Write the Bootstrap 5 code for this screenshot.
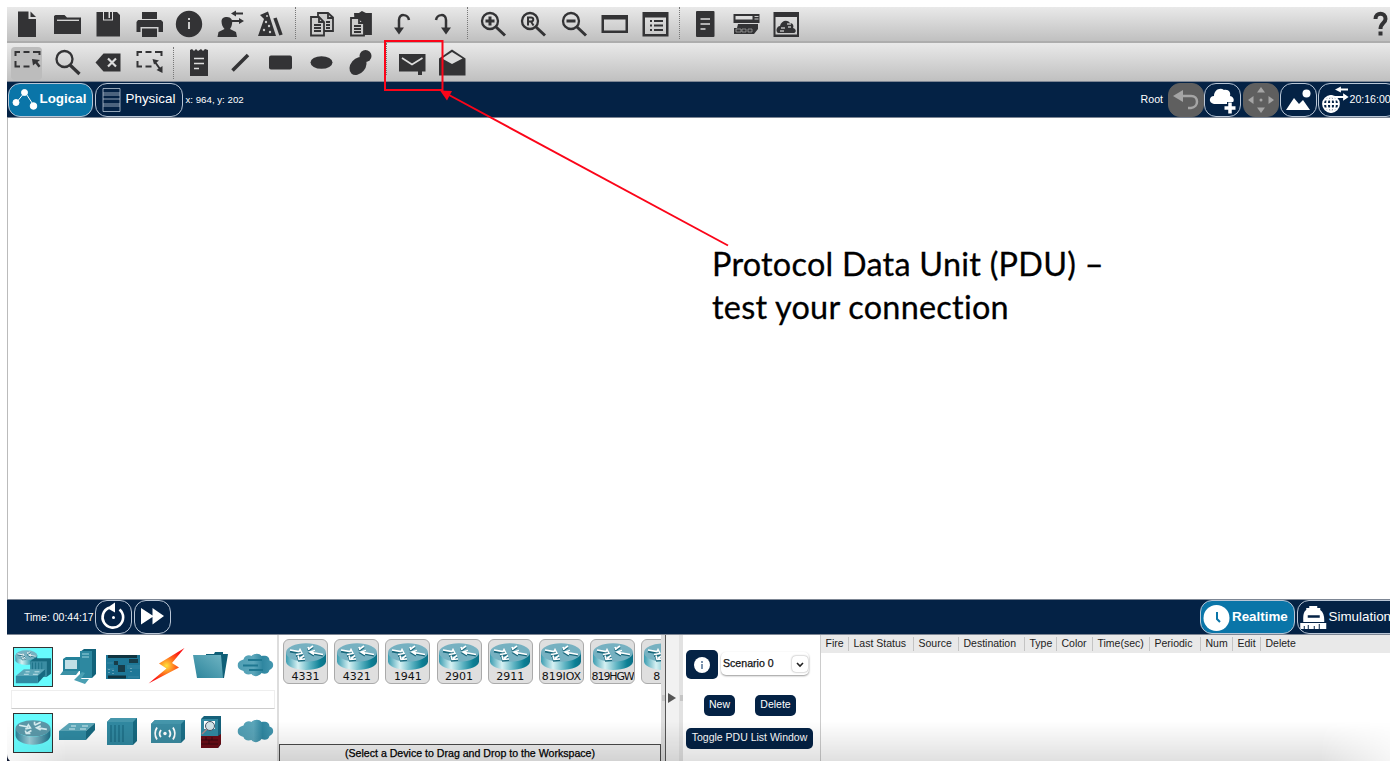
<!DOCTYPE html>
<html lang="en">
<head>
<meta charset="utf-8">
<title>Packet Tracer</title>
<link href="https://cdn.jsdelivr.net/npm/bootstrap@5.3.0/dist/css/bootstrap.min.css" rel="stylesheet">
<style>
:root{--navy:#042245;--ink:#333335;--blue:#0a75a8}
body{font-family:"Liberation Sans",Arial,sans-serif;background:#fff;width:1392px;height:761px;overflow:hidden;line-height:1.2;color:#222}
svg{display:block;flex:none}
.pt-app{margin:7px 2px 0 7px;width:1383px;height:754px;overflow:hidden}
.tools{background:linear-gradient(#e9e9e9,#c0c0c0);color:var(--ink)}
.tools-a{height:36px;border-bottom:2px solid #adadad}
.tools-b{height:38px}
.tool{width:40.5px;height:36px;flex:none;overflow:visible}
.divide{width:10px;flex:none;height:32px}
.divide::after{content:"";display:block;margin-left:4px;height:100%;border-left:1px dotted #777}
.picked{background:#bcbcbc;border-radius:4px;height:33px;width:31px;margin:4px 5.5px 0 4px}
.picked svg{margin:-4px 0 0 -4px}
.bar{background:var(--navy);color:#fff;border-top:1px solid #7d8694;border-bottom:1px solid #7d8694;font-size:10.6px}
.pill{height:34px;border:1.5px solid #b9c6d6;border-radius:12px;font-size:13.4px;flex:none}
.pill.on{background:var(--blue);font-weight:700}
.sq{width:37px}
.dim{width:36px;background:#5f5f5f;border-color:#5f5f5f;color:#a5a5a5}
.work{height:481px;border-left:1px solid #bbb}
.note-text{font-family:Lato,"Open Sans",sans-serif;font-size:32.4px;line-height:43px;letter-spacing:.25px;font-variant-ligatures:none;-webkit-text-stroke:.3px #000;color:#000;padding:123.500px 0 0 704px}
.dock{height:126px;position:relative;font-size:10.5px}
.shade{position:absolute;inset:auto 0 0 0;height:40px;background:linear-gradient(transparent,rgba(0,0,0,.12));-webkit-mask-image:linear-gradient(90deg,rgba(0,0,0,.3),#000 60px calc(100% - 70px),rgba(0,0,0,.3));pointer-events:none}
.kinds{width:272px;border-right:2px solid #ddd;padding:12px 0 0 6px}
.kinds .line{gap:4.5px;height:40px}
.kind{width:40px;height:40px;flex:none;color:#2f8fa9}
.kind.on{background:#67fbfd;border:1.5px solid #333}
.find{height:19px;width:264px;margin:3px 0 4px -2px;border:1px solid #eee;border-bottom-color:#ccc;background:#fff}
.models{width:382px}
.models .line{height:108.500px;gap:6.2px;padding:3.5px 0 0 4px;overflow:hidden}
.model{width:45px;height:45px;border:1.5px solid #aaa;border-radius:6px;background:#dfdfdf;flex:none;font:11px/11px "DejaVu Sans",sans-serif;color:#111;overflow:hidden;white-space:nowrap}
.hint{height:18px;border:1.5px solid #4a4a4a;border-bottom:0;background:#f1f1f1;color:#000;-webkit-text-stroke:.25px #000;font-size:10.6px;padding-top:2.500px}
.split{width:22px;background:linear-gradient(90deg,#ddd 0 4px,#555 4px 5.5px,#f1f1f1 5.5px 18px,#e2e2e2 18px)}
.scen{width:138px;padding:15px 0 0 3px;border-right:1px solid #ccc}
.key{background:var(--navy);color:#fff;border-radius:5px;height:20.5px}
.pick{width:88px;height:23px;border-radius:5px;box-shadow:0 1px 2px #999;font-size:10.6px;color:#111;-webkit-text-stroke:.25px #111;padding-left:2px}
.drop{width:16px;height:16px;border-radius:4px;box-shadow:0 0 2px #888;margin-right:1px}
.heads{display:grid;grid-template-columns:28px 65px 45px 66px 32px 36px 57px 51px 32px 28px 130px;height:18px;background:#e9e9e9;padding-top:2px}
.heads span{padding-left:4.5px;border-right:1.5px solid #c4c4c4;height:14px;line-height:13px;white-space:nowrap}
.heads span:last-child{border:0}
.over{position:absolute;left:0;top:0;pointer-events:none}
</style>
<script src="https://cdn.jsdelivr.net/npm/bootstrap@5.3.0/dist/js/bootstrap.bundle.min.js"></script>
</head>
<body class="position-relative m-0">
<svg width="0" height="0" class="position-absolute">
<defs>
<linearGradient id="rt" x1="0" x2="1"><stop offset="0" stop-color="#3b9cb0"/><stop offset=".3" stop-color="#d6f1f3"/><stop offset=".6" stop-color="#5db3c2"/><stop offset=".85" stop-color="#0c8095"/><stop offset="1" stop-color="#0c7086"/></linearGradient>
<linearGradient id="rd" x1="0" x2="1"><stop offset="0" stop-color="#277f96"/><stop offset=".4" stop-color="#9ccbd6"/><stop offset="1" stop-color="#1f7088"/></linearGradient>
<linearGradient id="fl" x1="0" x2="1" y1="1" y2="0"><stop offset="0" stop-color="#2b849b"/><stop offset="1" stop-color="#6fb4c3"/></linearGradient>
<linearGradient id="cl" x1="0" x2="1"><stop offset="0" stop-color="#4f9eb4"/><stop offset=".45" stop-color="#5ba6ba"/><stop offset=".7" stop-color="#2f86a0"/><stop offset="1" stop-color="#4598b0"/></linearGradient>
<radialGradient id="zap"><stop offset="0" stop-color="#ffe23a"/><stop offset=".5" stop-color="#ff6a1c"/><stop offset="1" stop-color="#fb1414"/></radialGradient>
<symbol id="router" viewBox="0 0 40 28"><path d="M0 9.500v9C0 23 9 27 20 27s20-4 20-8.500v-9z" fill="url(#rt)"/><ellipse cx="20" cy="9.500" rx="20" ry="9.200" fill="#76b1c1"/><g fill="none" transform="translate(0 .5)"><path d="M4 7l9 1.500 1-2 2 4-6 1M37 11l-11-2m3-2l-5 1.500 4 2.500M18 12l-4 3m-2-3l1 4 6-.5M22 6l5-3.500M22 3.500l1 3" stroke="#19687c" stroke-width="2.200" transform="translate(0 1)"/><path d="M4 6.500l9 1.500 1-2 2 4-6 1M37 11l-11-2m3-2l-5 1.500 4 2.500M18 12l-4 3m-2-3l1 4 6-.5M22 6l5-3.500M22 3.500l1 3" stroke="#fff" stroke-width="1.600"/></g></symbol>
<symbol id="cloud" viewBox="0 0 36 24"><path d="M6 6.500C7 2 12 1.500 14 3c3-3 8-3 10 0 4-1 8 0 8 4.500 5 1.500 5 7.500 0 9.500-1 4-5 4.500-8 3-3 4-8 4-10 1-4 1-7.500 0-8-3-8-2-8-9.500 0-11.500z" fill="url(#cl)"/></symbol>
<symbol id="sw" viewBox="0 0 36 20"><path d="M0 9h27v9H0z" fill="#2f8aa2"/><path d="M0 9L10 1h26l-9 8z" fill="#5ba6b8"/><path d="M27 9l9-8v7L27 18z" fill="#176a81"/><path d="M10 7h6m-4-3h5M21 7h6m-4-3h6" stroke="#d5eef2" stroke-width="1"/></symbol>
</defs></svg>

<div class="pt-app">
 <div class="tools tools-a d-flex">
  <svg class="tool" viewBox="0 0 40.5 36" fill="currentColor"><path d="M11 4.500h10.500V12H29v18H11z"/><path d="M23.500 4.500v5.500H29z"/></svg>
  <svg class="tool" viewBox="0 0 40.5 36" fill="currentColor"><path d="M7.500 8h9l2.500 2.500h14V27h-27V9z"/><path d="M9 13.300h22" stroke="#ddd" stroke-width="1.300"/></svg>
  <svg class="tool" viewBox="0 0 40.5 36" fill="currentColor"><path d="M8.500 5H15v8.500h10V5h4l3 3v21.500H8.500z"/><path d="M16 5h4.500v6H22V5h2v7.500h-8z"/></svg>
  <svg class="tool" viewBox="0 0 40.5 36" fill="currentColor"><path d="M13 5h15v7H13zM9 13h23l2 2v10h-4.500v-5h-18v5H7.500V15zM13 21.500h15V30H13z"/></svg>
  <svg class="tool" viewBox="0 0 40.5 36" fill="currentColor"><circle cx="20" cy="17" r="13.200"/><path d="M20 11v2m0 2v7" stroke="#ccc" stroke-width="2"/></svg>
  <svg class="tool" viewBox="0 0 40.5 36" fill="currentColor"><path d="M17 10c4 0 6 3 5 7-.5 3-1.500 4-2 5l6 3 1 5H7.500l1-5 6-3c-2-2-3-5-3-8 .5-3 2-4 5.500-4z"/><path d="M24 6.500h9M22 14h9" stroke="currentColor" stroke-width="2"/><path d="M21 6.500l5-3v6zM34 14l-5-3v6z"/></svg>
  <svg class="tool" viewBox="0 0 40.5 36" fill="currentColor"><path d="M10 8l8-3.500L26 29H8l6-17z"/><path d="M25 11l6 17" stroke="currentColor" stroke-width="3.500"/><g fill="#ccc"><circle cx="16" cy="15" r="1.200"/><circle cx="19" cy="19" r="1.200"/><circle cx="14" cy="23" r="1.200"/><circle cx="20" cy="25" r="1.200"/><circle cx="17" cy="9" r="1"/></g></svg>
  <div class="divide"></div>
  <svg class="tool" viewBox="0 0 40.5 36" fill="#ccc" stroke="currentColor" stroke-width="1.800"><path d="M17 6h10l5 4.500V24H17z"/><path d="M10 10h8l5 5v13.500H10z"/><path d="M18 10v5h5M27 6v5h5M13 18h7m-7 3h7m-7 3h7m5-9h4m-4 3h4m-4 3h4" fill="none"/></svg>
  <svg class="tool" viewBox="0 0 40.5 36" fill="#ccc" stroke="currentColor" stroke-width="1.800"><path d="M14 7h4l3-2 4 2h5v20H15z" fill="currentColor"/><path d="M10 11h8l5 5v12.500H10z"/><path d="M18 11v5h5M13 19h7m-7 3h7m-7 3h7" fill="none"/></svg>
  <svg class="tool" viewBox="0 0 40.5 36" fill="currentColor"><path d="M17 23V13c0-7 9-6 10 0" fill="none" stroke="currentColor" stroke-width="2.500"/><path d="M12 20.500h10L17 27.500z"/></svg>
  <svg class="tool" viewBox="0 0 40.5 36" fill="currentColor"><path d="M24 23V13c0-7-9-6-10 0" fill="none" stroke="currentColor" stroke-width="2.500"/><path d="M19 20.500h10L24 27.500z"/></svg>
  <div class="divide"></div>
  <svg class="tool" viewBox="0 0 40.5 36" fill="none" stroke="currentColor"><circle cx="17" cy="14" r="8" stroke-width="2.300"/><path d="M23 20l9 8.500M12.500 14h9M17 9.500v9" stroke-width="3"/></svg>
  <svg class="tool" viewBox="0 0 40.5 36" fill="none" stroke="currentColor"><circle cx="17" cy="14" r="8" stroke-width="2.300"/><path d="M23 20l9 8.500" stroke-width="3"/><path d="M15 18.500v-8h3c3 0 3 4 0 4h-3m3 0l2.500 4" stroke-width="2"/></svg>
  <svg class="tool" viewBox="0 0 40.5 36" fill="none" stroke="currentColor"><circle cx="17" cy="14" r="8" stroke-width="2.300"/><path d="M23 20l9 8.500M12.500 14h9" stroke-width="3"/></svg>
  <svg class="tool" viewBox="0 0 40.5 36" fill="currentColor"><path fill-rule="evenodd" d="M7.500 8h26.500v18H7.500zM10 12.500v11h21.500v-11z"/></svg>
  <svg class="tool" viewBox="0 0 40.5 36" fill="currentColor"><path fill-rule="evenodd" d="M7.500 5h26v24.500h-26zM10 10.500V27h21V10.500z"/><path d="M15 14h2m2 0h9M15 18.500h2m2 0h9M15 23h2m2 0h9" stroke="currentColor" stroke-width="2.200"/></svg>
  <div class="divide"></div>
  <svg class="tool" viewBox="0 0 40.5 36" fill="currentColor"><rect x="11" y="4" width="18.500" height="26" rx="1"/><path d="M15.500 12h9.500m-9.500 5h9.500m-9.500 5h5" stroke="#ddd" stroke-width="1.600"/></svg>
  <svg class="tool" viewBox="0 0 40.5 36" fill="currentColor"><path d="M7.500 7h26v9h-26z"/><path d="M9.500 9h17v3.500h-17z" fill="#ddd"/><path d="M28.500 9.500h4m-4 2.500h4" stroke="#ccc"/><path d="M12 17h20v5l-4 5H8v-6h3z"/><path d="M10 22h5v3h-5zm6 0h4v3h-4zm6 0h4v3h-4z" fill="none" stroke="#aaa" stroke-width=".7"/></svg>
  <svg class="tool" viewBox="0 0 40.5 36" fill="currentColor"><path fill-rule="evenodd" d="M7.500 5H33v25H7.500zM9.500 10v17.500H31V10z"/><path d="M12 26c-3-2-1-7 2-7 1-5 7-7 10-3 3 0 4 3 3 5 4 1 3 5 1 5z"/><path d="M15 21h4m-5 3h4m3-7h4m-3 3h3" stroke="#bbb" stroke-width="1.500"/></svg>
  <svg class="tool ms-auto" viewBox="0 0 40.5 36" fill="none" stroke="currentColor" stroke-width="4"><path d="M25.500 12c0-7 10-7 10 0 0 4-5 4-5 10"/><path d="M30.500 24.500v4"/></svg>
 </div>
 <div class="tools tools-b d-flex">
  <div class="picked"><svg class="tool" viewBox="0 0 40.5 36" fill="none" stroke="currentColor" stroke-width="2"><path d="M8.500 13V9H13m3.500 0h6m3.500 0h6.500v3M8.500 18v5.500H13m3.500 0h6"/><path d="M25 16l8 1-2.500 2 3 4-2 1.500-3-4-2.500 2z" fill="currentColor" stroke="none"/></svg></div>
  <svg class="tool" viewBox="0 0 40.5 36" fill="none" stroke="currentColor"><circle cx="16.500" cy="16" r="8" stroke-width="2.300"/><path d="M22 22l9.500 9" stroke-width="3.200"/></svg>
  <svg class="tool" viewBox="0 0 40.5 36" fill="currentColor"><path d="M7.500 19.500l8-9h17v18h-17z"/><path d="M20 15.500l8 8m0-8l-8 8" stroke="#ddd" stroke-width="2.200"/></svg>
  <svg class="tool" viewBox="0 0 40.500 36" fill="none" stroke="currentColor" stroke-width="2"><path d="M8.500 13V9H13m3.500 0h6m3.500 0h6.500v4M8.500 18v5.500H13m3.500 0h6M26 19l5 7"/><path d="M23.500 16l6.500 1.500-5 4zM33.500 30v-7l-6 4z" fill="currentColor" stroke="none"/></svg>
  <div class="divide mt-1"></div>
  <svg class="tool" viewBox="0 0 40.5 36" fill="currentColor"><path d="M11 7l2-1 2 2 2-2 2 2 3-2 2 2 2-2 3 1v26H11z"/><path d="M15 15.500h10m-10 5h10m-10 5h5" stroke="#ddd" stroke-width="1.600"/></svg>
  <svg class="tool" viewBox="0 0 40.5 36"><path d="M12.500 27.500L28 12" stroke="currentColor" stroke-width="3.500"/></svg>
  <svg class="tool" viewBox="0 0 40.5 36" fill="currentColor"><rect x="9" y="12.500" width="23" height="14" rx="2"/></svg>
  <svg class="tool" viewBox="0 0 40.5 36" fill="currentColor"><ellipse cx="20.500" cy="19.500" rx="11" ry="6.300"/></svg>
  <svg class="tool" viewBox="0 0 40.5 36" fill="currentColor"><circle cx="24.500" cy="13" r="6"/><ellipse cx="17" cy="23" rx="10" ry="7.300" transform="rotate(-50 17 23)"/></svg>
  <div class="divide"></div>
  <svg class="tool" viewBox="0 0 40.5 36" fill="currentColor"><path d="M7 11h26.500v17.500H30V32h-4v-3.500H7z"/><path d="M10 15l10 6.500L30.500 15" fill="none" stroke="#ddd" stroke-width="1.700"/></svg>
  <svg class="tool" viewBox="0 0 40.5 36" fill="currentColor"><path d="M7 15.500L20 6.500l13.500 9v17H7z"/><path d="M10 15.500L20 9l10.500 6.500L20 21z" fill="#dcdcdc"/></svg>
 </div>
 <div class="bar d-flex align-items-center" style="height:37px">
  <div class="pill on d-flex align-items-center" style="width:85px;margin-left:.5px"><svg width="31" height="30" viewBox="0 0 31 30" fill="#fff" stroke="#fff"><path d="M7 18l9-11 9 14" fill="none"/><circle cx="7" cy="17.500" r="3"/><circle cx="15.500" cy="7.500" r="3"/><circle cx="24.500" cy="21" r="3.300"/></svg>Logical</div>
  <div class="pill d-flex align-items-center" style="width:88px;margin-left:2px"><svg width="30" height="30" viewBox="0 0 30 30" fill="none" stroke="#b9c6d6" stroke-width=".8"><path d="M7 3.500h17v23H7zM7 8h17M7 10h17M7 14h17M7 19h17M7 21h17"/></svg>Physical</div>
  <span style="margin-left:3px;font-size:9.700px">x: 964, y: 202</span>
  <span style="margin:0 5px 0 auto">Root</span>
  <div class="pill sq dim"><svg width="34" height="31" viewBox="0 0 34 31"><path d="M9 12h13c8 0 8 11 0 12h-3" fill="none" stroke="currentColor" stroke-width="2.500"/><path d="M4 12l10-6v12z" fill="currentColor"/></svg></div>
  <div class="pill sq ms-0"><svg width="34" height="31" viewBox="0 0 34 31" fill="#fff"><path d="M9 20c-6-1-5-8 0-8 0-6 6-9 10-6 5-1 7 3 6 6 5 1 5 7 0 8z"/><path d="M25 18v12m-6-6h12" stroke="#042245" stroke-width="6"/><path d="M25 18.500v11M19.500 24h11" stroke="#fff" stroke-width="3.500"/></svg></div>
  <div class="pill sq dim" style="margin-left:1.500px"><svg width="34" height="31" viewBox="0 0 34 31" fill="currentColor"><path d="M17 3l4 5.500h-8zM17 29l4-5.500h-8zM4 16l5.500-4v8zM30 16l-5.500-4v8z"/><circle cx="17" cy="16" r="1.500"/></svg></div>
  <div class="pill sq" style="margin-left:1px"><svg width="34" height="31" viewBox="0 0 34 31" fill="#fff"><path d="M5 26l8-12 5 6 4-4 7 10z"/><circle cx="25.500" cy="9.500" r="4"/></svg></div>
  <div class="pill d-flex align-items-center overflow-hidden" style="width:80px;margin:0 -7.500px 0 1px;font-size:10.600px"><svg width="31" height="31" viewBox="0 0 31 31" fill="none" stroke="#fff" stroke-width="1.800"><circle cx="12" cy="20" r="8"/><ellipse cx="12" cy="20" rx="4" ry="8"/><path d="M4 20h16M12 12v16M6 15.500h12M6 24.500h12"/><path d="M20 5.500h9M16 13h9" stroke-width="2.200"/><path d="M18 5.500l3-1.500v3zM28 13l-3-2v4z" fill="#fff"/></svg><span class="text-nowrap">20:16:00</span></div>
 </div>
 <div class="work"><div class="note-text">Protocol Data Unit (PDU) –<br>test your connection</div></div>
 <div class="bar d-flex align-items-center" style="height:36px;font-size:10.500px">
  <span style="width:88px;padding-left:17px;flex:none">Time: 00:44:17</span>
  <div class="pill sq"><svg width="34" height="31" viewBox="0 0 34 31"><path d="M13 6.800A10.300 10.300 0 1 0 23.500 8.500" fill="none" stroke="#fff" stroke-width="2.600"/><path d="M11 7l8-5.500v10z" fill="#fff"/><circle cx="17.500" cy="16.500" r="1.500" fill="#fff"/></svg></div>
  <div class="pill sq" style="margin-left:2px"><svg width="34" height="31" viewBox="0 0 34 31" fill="#fff"><path d="M6 7l11.500 7.500V7L29 15 17.500 23.500V16L6 23.500z"/></svg></div>
  <div class="pill on d-flex align-items-center ms-auto" style="width:95px"><svg width="31" height="31" viewBox="0 0 31 31"><circle cx="15.500" cy="16" r="13" fill="#fff"/><path d="M16 10v7l3 3" fill="none" stroke="#0a75a8" stroke-width="2"/></svg>Realtime</div>
  <div class="pill d-flex align-items-center overflow-hidden" style="width:108px;margin:0 -15px 0 2px"><svg width="30.500" height="31" viewBox="0 0 30 31" fill="#fff"><path d="M8 8V6h3V4h8v2h3v2c3 2 4 6 4 10v2H5v-2c0-4 0-8 3-10z"/><path d="M9.500 14.500h12" stroke="#042245" stroke-width="2.500"/><path d="M2 21h26v6H2z"/><path d="M6 24v3m4-4v4m6-3v3m5-5v5" stroke="#042245"/></svg>Simulation</div>
 </div>
 <div class="dock d-flex">
  <div class="kinds flex-shrink-0">
   <div class="d-flex line">
    <svg class="kind on" viewBox="0 0 37 37"><use href="#router" x="1" y="2" width="22" height="15"/><path d="M16 13l4-3h16v15l-4 3H16z" fill="#17687e"/><path d="M16 13h16v15H16z" fill="#3b8da3"/><path d="M18 14v13m3-13v13m3-13v13m3-13v13" stroke="#1f748a"/><use href="#sw" x="1.500" y="20" width="29" height="16"/></svg>
    <svg class="kind" viewBox="0 0 40 40"><path d="M22 5l4-3h12v25l-4 4H22z" fill="#11627a"/><path d="M22 4h12v27H22z" fill="#2d88a0"/><path d="M24 7h7m-7 3h7" stroke="#9cd3de"/><path d="M5 12l3-2h14v14H5z" fill="#25829a"/><path d="M7 13h12v9H7z" fill="#c0dfe6"/><path d="M2 28l3-4h16l-3 4z" fill="#3b91a6"/><path d="M16 33l8-8 3 1-4 6h8l-4 5z" fill="#4ba0b3"/></svg>
    <svg class="kind" viewBox="0 0 40 40"><path d="M4 8h34v24H4z" fill="#1e7797"/><path d="M6 9.500h29M6 30h18" stroke="#103440" stroke-width="3"/><path d="M16 18h7v7h-7zM12 14h4v4h-4zM27 12h9v4h-9z" fill="#173c49"/><path d="M5 16h6m-6 6h7m13-3h13m-13 2h13M26 30h11" stroke="#3988a3"/><path d="M7 22v6m4-5v5m18-7v4" stroke="#9fc6d3" stroke-dasharray="1 2"/></svg>
    <svg class="kind" viewBox="0 0 40 40"><path d="M37.500 1L12 16.500l7.500 5L1.500 36.500 32 20.500l-7-4.500z" fill="url(#zap)"/></svg>
    <svg class="kind" viewBox="0 0 40 40"><path d="M15 9V7h8l1-2h8v2h5l-4 24H8z" fill="#0f5f77"/><path d="M2 8h28l2 23H6z" fill="url(#fl)"/></svg>
    <svg class="kind" viewBox="0 0 40 40"><use href="#cloud" x="1.500" y="6" width="36" height="24"/><path d="M12 13h14M7 18.500h15m-9 4.500h14" stroke="#1f7891" stroke-width="2"/></svg>
   </div>
   <div class="find"></div>
   <div class="d-flex line">
    <svg class="kind on" viewBox="0 0 37 37"><ellipse cx="18.500" cy="14" rx="17" ry="8" fill="#5b98a8"/><path d="M1.500 14v7c0 5 8 9 17 9s17-4 17-9v-7c0 4-8 8-17 8S1.500 18 1.500 14z" fill="url(#rd)"/><path d="M5 11l8 1.500 1-2 2 3-5 1M32 15l-9-1.500m3-2l-4 2 4 2M17 16l-5 3m-1-3l1 3 4 0M20 11l6-3m-6-.5v3" fill="none" stroke="#d7edf0" stroke-width="1.600"/></svg>
    <svg class="kind" viewBox="0 0 40 40"><use href="#sw" x="1" y="9" width="36" height="20"/></svg>
    <svg class="kind" viewBox="0 0 40 40"><path d="M5 9l4-4h26v23l-4 4H5z" fill="#176a81"/><path d="M5 9l4-4h26l-4 4z" fill="#4596ab"/><path d="M5 9h26v23H5z" fill="#3189a1"/><path d="M9 12v17m4-17v17m4-17v17m4-17v17" stroke="#1e6f86" stroke-width="1.500"/></svg>
    <svg class="kind" viewBox="0 0 40 40"><path d="M4 11l4-4h30v19l-4 4H4z" fill="#1c7088"/><path d="M4 11l4-4h30l-4 4z" fill="#4596ab"/><path d="M4 11h30v19H4z" fill="#3b8ca2"/><g fill="none" stroke="#fff" stroke-width="1.800"><path d="M10 14.500c-2.500 4-2.500 8 0 12m4-9.500c-2 3-2 5 0 7M26 14.500c2.500 4 2.500 8 0 12m-4-9.500c2 3 2 5 0 7"/></g><circle cx="18" cy="20.500" r="1.700" fill="#fff"/></svg>
    <svg class="kind" viewBox="0 0 40 40"><path d="M10 6l3-3h17v28l-3 4H10z" fill="#16617a"/><path d="M10 6h17v29H10z" fill="#3189a1"/><path d="M10 23h17l3-2v10l-3 4H10z" fill="#6b0d17"/><path d="M10 27h17m-17 4h17m-12-7v3m6-3v3m-3 0v4" stroke="#29060b" stroke-width=".7"/><path d="M13 8h11v8H13z" fill="#fff"/><circle cx="19" cy="13" r="4.500" fill="#d2e4e8" stroke="#456"/><path d="M16 16l-5 5" stroke="#a88" stroke-width="1.500"/></svg>
    <svg class="kind" viewBox="0 0 40 40"><use href="#cloud" x="1.500" y="6" width="36" height="24"/></svg>
   </div>
  </div>
  <div class="models flex-shrink-0">
   <div class="line d-flex">
    <div class="model text-center"><svg class="mx-auto" width="40" height="31"><use href="#router" y="3" width="40" height="28"/></svg>4331</div>
    <div class="model text-center"><svg class="mx-auto" width="40" height="31"><use href="#router" y="3" width="40" height="28"/></svg>4321</div>
    <div class="model text-center"><svg class="mx-auto" width="40" height="31"><use href="#router" y="3" width="40" height="28"/></svg>1941</div>
    <div class="model text-center"><svg class="mx-auto" width="40" height="31"><use href="#router" y="3" width="40" height="28"/></svg>2901</div>
    <div class="model text-center"><svg class="mx-auto" width="40" height="31"><use href="#router" y="3" width="40" height="28"/></svg>2911</div>
    <div class="model text-center"><svg class="mx-auto" width="40" height="31"><use href="#router" y="3" width="40" height="28"/></svg><span style="letter-spacing:-.1px">819IOX</span></div>
    <div class="model text-center"><svg class="mx-auto" width="40" height="31"><use href="#router" y="3" width="40" height="28"/></svg><span style="letter-spacing:-1.100px">819HGW</span></div>
    <div class="model ps-0"><svg class="mx-auto" width="40" height="31"><use href="#router" y="3" width="40" height="28"/></svg><span style="margin-left:11px">8</span></div>
   </div>
   <div class="hint text-center">(Select a Device to Drag and Drop to the Workspace)</div>
  </div>
  <div class="split flex-shrink-0 d-flex align-items-center"><svg width="22" height="14" viewBox="0 0 22 14"><path d="M7 2l8 5-8 5z" fill="#555"/><path d="M1 4h3v6H1zM19 4h3v6h-3z" fill="#c5c5c5"/></svg></div>
  <div class="scen flex-shrink-0">
   <div class="d-flex">
    <div class="key d-flex align-items-center justify-content-center" style="width:32px;height:29px"><svg width="16" height="16" viewBox="0 0 16 16"><circle cx="8" cy="8" r="8" fill="#fff"/><path d="M8 4v2m0 1v5" stroke="#6d87a5" stroke-width="1.800"/></svg></div>
    <div class="pick d-flex align-items-center" style="margin:2px 0 0 3px"><span>Scenario 0</span><div class="drop ms-auto"><svg width="16" height="16" viewBox="0 0 16 16"><path d="M5 7l3 3 3-3" fill="none" stroke="#222" stroke-width="1.600"/></svg></div></div>
   </div>
   <div class="d-flex" style="padding:16px 0 0 18px;gap:20px"><div class="key text-center" style="width:31px;line-height:19px">New</div><div class="key text-center" style="width:41px;line-height:19px">Delete</div></div>
   <div class="key text-center text-nowrap" style="width:127px;margin-top:12.500px;line-height:19px">Toggle PDU List Window</div>
  </div>
  <div class="flex-grow-1"><div class="heads"><span>Fire</span><span>Last Status</span><span>Source</span><span>Destination</span><span>Type</span><span>Color</span><span>Time(sec)</span><span>Periodic</span><span>Num</span><span>Edit</span><span>Delete</span></div></div>
  <div class="shade"></div>
 </div>
</div>
<svg class="over" width="1392" height="761" fill="none" stroke="#fb0519"><rect x="385" y="41" width="57.500" height="49" stroke-width="2"/><path d="M449 95l279 150.500" stroke-width="1.900"/><path d="M440 90.500l12 .5-5 9.500z" fill="#fb0519" stroke="none"/><path d="M7 754v7h3c-2-2-3-4-3-7z" fill="#111a33" stroke="none"/></svg>
</body>
</html>
